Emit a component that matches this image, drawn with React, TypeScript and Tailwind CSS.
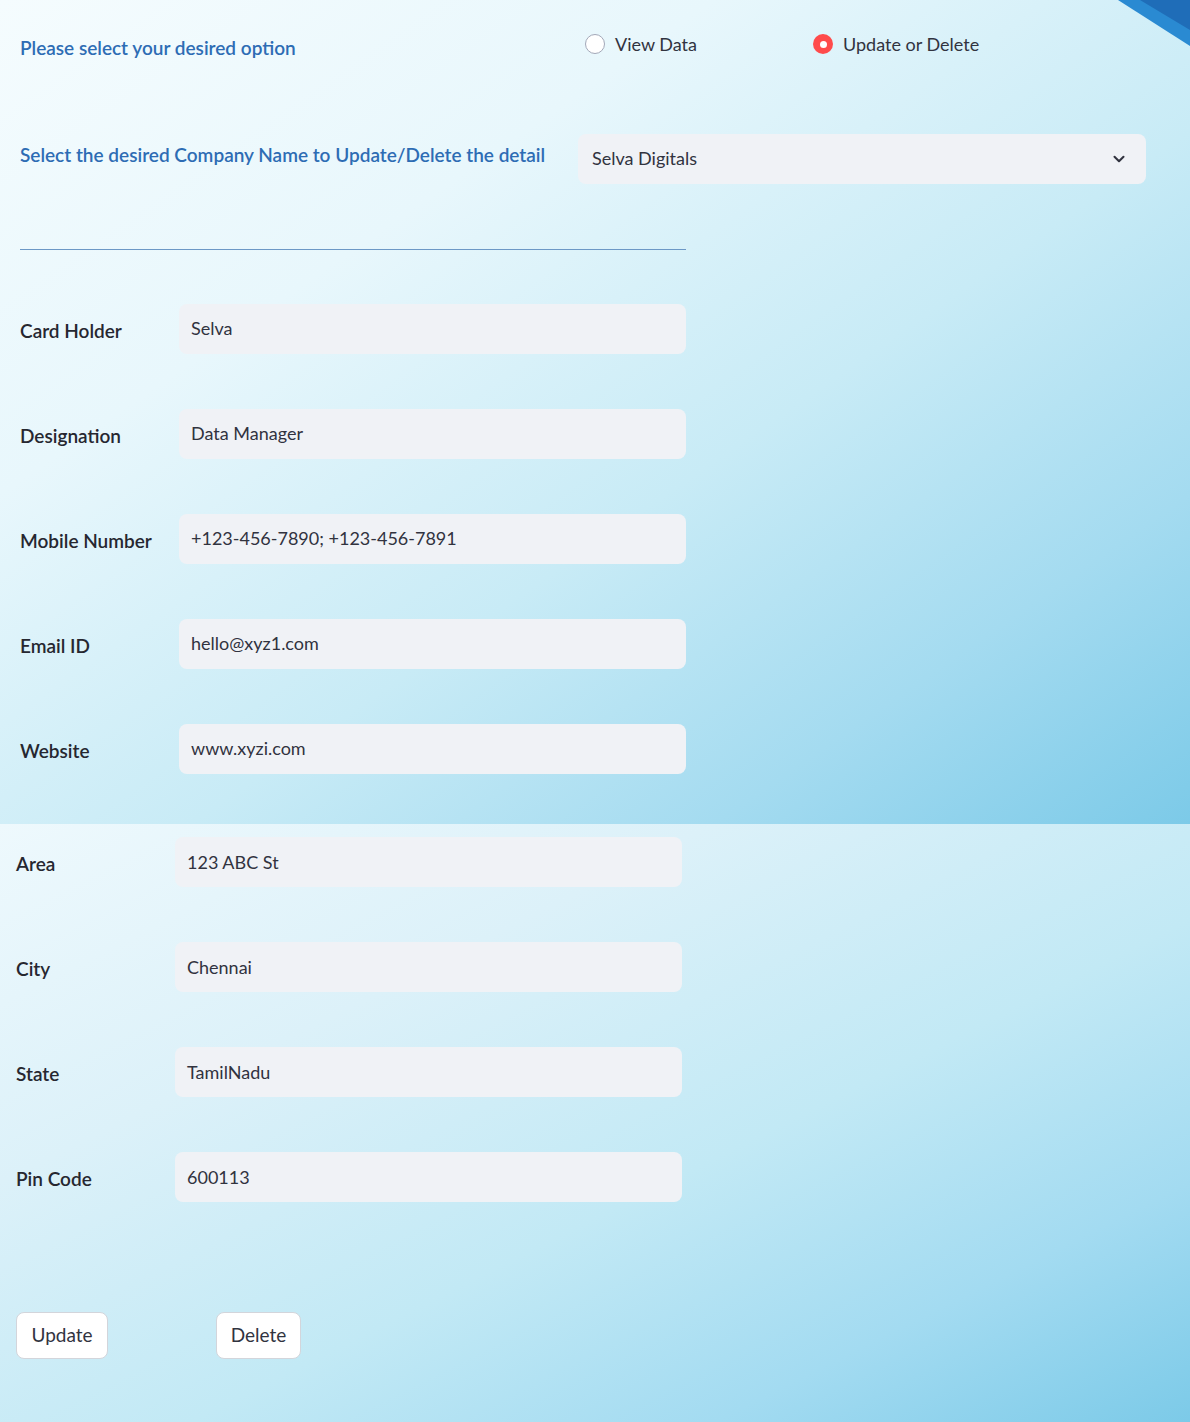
import { ChevronDown } from 'lucide-react';

const font = 'font-["Lato","Noto_Sans",sans-serif]';

interface FieldRowProps {
  label: string;
  value: string;
}

function FieldRow({ label, value }: FieldRowProps) {
  return (
    <div className="flex items-center h-[50px] mb-[55px]">
      <div className="w-[159px] pt-[5px] text-[19px] font-semibold text-[#262730]">{label}</div>
      <div className="w-[507px] h-[50px] rounded-lg bg-[#f0f2f6] flex items-center px-3 text-[18px] text-[#31333f]">
        {value}
      </div>
    </div>
  );
}

function Radio({ label, checked }: { label: string; checked?: boolean }) {
  return (
    <div className="flex items-center gap-[10px]">
      {checked ? (
        <span className="w-5 h-5 rounded-full bg-[#ff4b4b] flex items-center justify-center">
          <span className="w-[7px] h-[7px] rounded-full bg-white" />
        </span>
      ) : (
        <span className="w-5 h-5 rounded-full bg-white border border-[#a3a8b8]" />
      )}
      <span className="text-[18px] text-[#31333f]">{label}</span>
    </div>
  );
}

function Corner() {
  return (
    <svg className="absolute top-0 right-0" width="80" height="50" viewBox="0 0 80 50">
      <polygon points="8,0 80,0 80,46" fill="#2a8ad2" />
      <polygon points="30,0 80,0 80,30" fill="#1f6db8" />
    </svg>
  );
}

export default function App() {
  const topFields = [
    { label: 'Card Holder', value: 'Selva' },
    { label: 'Designation', value: 'Data Manager' },
    { label: 'Mobile Number', value: '+123-456-7890; +123-456-7891' },
    { label: 'Email ID', value: 'hello@xyz1.com' },
    { label: 'Website', value: 'www.xyzi.com' },
  ];
  const bottomFields = [
    { label: 'Area', value: '123 ABC St' },
    { label: 'City', value: 'Chennai' },
    { label: 'State', value: 'TamilNadu' },
    { label: 'Pin Code', value: '600113' },
  ];

  return (
    <div className={`w-[1190px] ${font}`}>
      {/* first screen */}
      <section className="relative h-[824px] overflow-hidden px-5 bg-[linear-gradient(to_bottom_right,#f5fcfe_0%,#e8f7fc_30%,#c8ebf6_58%,#a4dbf0_80%,#7ccae8_100%)]">
        <Corner />
        <div className="flex items-center pt-[26px]">
          <div className="w-[558px] pt-[8px] text-[19px] font-semibold text-[#2d6cb4]">
            Please select your desired option
          </div>
          <div className="flex items-center pl-[7px]">
            <div className="w-[228px]">
              <Radio label="View Data" />
            </div>
            <Radio label="Update or Delete" checked />
          </div>
        </div>

        <div className="flex items-center mt-[71px]">
          <div className="w-[558px] pb-[6px] text-[19px] font-semibold text-[#2d6cb4]">
            Select the desired Company Name to Update/Delete the detail
          </div>
          <div className="w-[568px] h-[50px] rounded-lg bg-[#f0f2f6] flex items-center justify-between pl-[14px] pr-[18px] text-[18px] text-[#31333f]">
            <span>Selva Digitals</span>
            <ChevronDown size={18} strokeWidth={2.75} className="text-[#31333f]" />
          </div>
        </div>

        <div className="w-[666px] h-px bg-[#6c98c6] mt-[65px] mb-[54px]" />

        {topFields.map((f) => (
          <FieldRow key={f.label} label={f.label} value={f.value} />
        ))}
      </section>

      {/* second screen */}
      <section className="h-[598px] pl-4 pt-[13px] bg-[linear-gradient(to_bottom_right,#eef9fd_0%,#dcf1f9_30%,#c2e9f5_58%,#a3dbf1_80%,#7ccae8_100%)]">
        {bottomFields.map((f) => (
          <FieldRow key={f.label} label={f.label} value={f.value} />
        ))}
        <div className="flex items-center mt-[110px]">
          <button className="w-[92px] h-[47px] flex items-center justify-center rounded-lg bg-white border border-[#d3d5db] text-[19px] text-[#31333f]">
            Update
          </button>
          <button className="ml-[108px] w-[85px] h-[47px] flex items-center justify-center rounded-lg bg-white border border-[#d3d5db] text-[19px] text-[#31333f]">
            Delete
          </button>
        </div>
      </section>
    </div>
  );
}
